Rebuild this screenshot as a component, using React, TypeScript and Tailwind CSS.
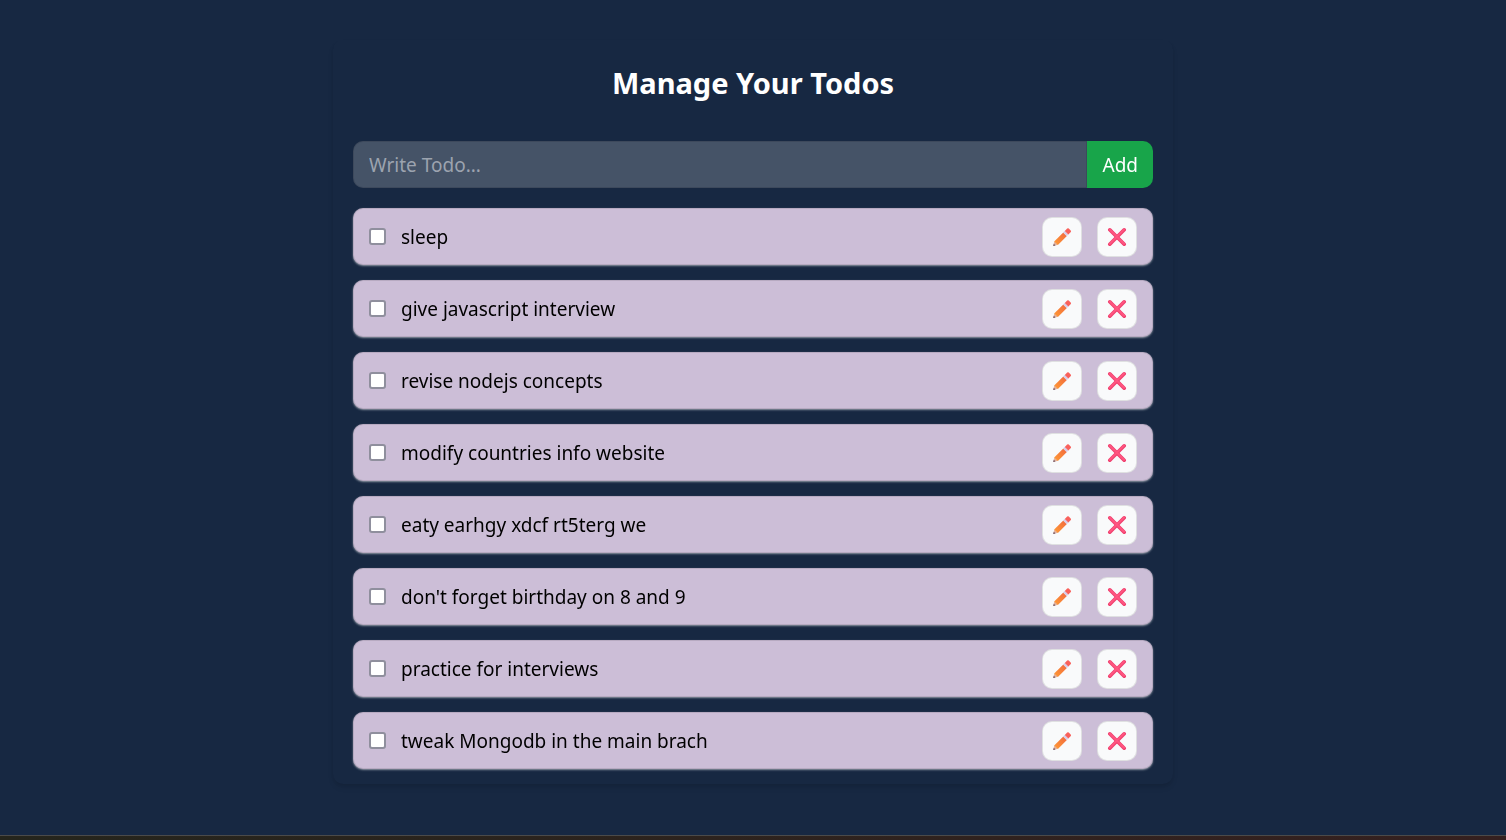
import { useState } from "react";

type Todo = { id: number; text: string; done: boolean };

const initialTodos: Todo[] = [
  "sleep",
  "give javascript interview",
  "revise nodejs concepts",
  "modify countries info website",
  "eaty earhgy xdcf rt5terg we",
  "don't forget birthday on 8 and 9",
  "practice for interviews",
  "tweak Mongodb in the main brach",
].map((text, id) => ({ id, text, done: false }));

function PencilIcon() {
  return (
    <svg viewBox="0 0 20 20" className="size-5" aria-hidden="true">
      <defs>
        <linearGradient id="pencil-body" x1="0" y1="1" x2="1" y2="0">
          <stop offset="0" stopColor="#ff9c35" />
          <stop offset="1" stopColor="#f1673f" />
        </linearGradient>
      </defs>
      <path d="M1.2 19 L2.4 14.2 L6 17.8 Z" fill="#e3b09a" />
      <path d="M1.2 19 L1.8 16.7 L3.5 18.4 Z" fill="#6b5365" />
      <path d="M2.2 14.4 L11.3 5.4 L14.9 9 L5.9 18 Z" fill="url(#pencil-body)" />
      <path d="M11 5.6 L13 3.7 L16.6 7.3 L14.7 9.2 Z" fill="#d9cde6" />
      <path d="M12.8 3.9 L15.2 1.5 Q16 0.9 16.8 1.6 L18.7 3.5 Q19.4 4.3 18.8 5.1 L16.4 7.5 Z" fill="#f9605b" />
    </svg>
  );
}

function CrossIcon() {
  return (
    <svg viewBox="0 0 20 20" className="size-5" aria-hidden="true" fill="none" strokeLinecap="round">
      <path d="M2.8 2.8 L17.2 17.2 M17.2 2.8 L2.8 17.2" stroke="#ee3d6c" strokeWidth="3.6" />
      <path d="M2.8 2.6 L17 16.8 M17 2.6 L2.8 16.8" stroke="#ff5580" strokeWidth="2" />
    </svg>
  );
}

const iconButton =
  "flex size-10 shrink-0 items-center justify-center rounded-[10px] border border-black/10 bg-gray-50 hover:bg-gray-100";

export default function App() {
  const [todos, setTodos] = useState(initialTodos);
  const [draft, setDraft] = useState("");

  const add = () => {
    const text = draft.trim();
    if (!text) return;
    setTodos([{ id: Date.now(), text, done: false }, ...todos]);
    setDraft("");
  };

  return (
    <div className="flex min-h-screen flex-col bg-[#172842] font-['Noto_Sans',sans-serif] text-[19px] leading-7">
      <main className="flex-1 px-4 pt-10 pb-[50px]">
        <div className="mx-auto w-full max-w-[840px] rounded-[10px] px-5 pt-6 pb-[15px] text-white shadow-md">
          <h1 className="mb-10 text-center text-[29px] leading-[37px] font-bold">Manage Your Todos</h1>
          <form
            className="mb-5 flex"
            onSubmit={(e) => {
              e.preventDefault();
              add();
            }}
          >
            <input
              type="text"
              autoFocus
              aria-label="New todo"
              placeholder="Write Todo..."
              value={draft}
              onChange={(e) => setDraft(e.target.value)}
              className="h-[47px] min-w-0 flex-1 rounded-l-[10px] border border-black/10 bg-white/20 px-[15px] outline-none placeholder:text-[#9ca3af]"
            />
            <button type="submit" className="shrink-0 rounded-r-[10px] bg-[#18a54a] px-[15px] text-white">
              Add
            </button>
          </form>
          <ul className="flex flex-col gap-[15px]">
            {todos.map((todo) => (
              <li
                key={todo.id}
                className="flex h-[57px] items-center gap-[15px] rounded-[10px] border border-black/10 bg-[#ccbed7] px-[15px] text-black shadow-[0_1px_2px_rgba(255,255,255,0.5)]"
              >
                <input
                  id={`todo-${todo.id}`}
                  type="checkbox"
                  checked={todo.done}
                  onChange={() => setTodos(todos.map((t) => (t.id === todo.id ? { ...t, done: !t.done } : t)))}
                  className="size-[17px] shrink-0 appearance-none rounded-[3px] border-2 border-[#8f8f9d] bg-white checked:bg-[#18a54a]"
                />
                <label htmlFor={`todo-${todo.id}`} className={todo.done ? "flex-1 line-through" : "flex-1"}>
                  {todo.text}
                </label>
                <button type="button" aria-label="Edit todo" className={iconButton}>
                  <PencilIcon />
                </button>
                <button
                  type="button"
                  aria-label="Delete todo"
                  onClick={() => setTodos(todos.filter((t) => t.id !== todo.id))}
                  className={iconButton}
                >
                  <CrossIcon />
                </button>
              </li>
            ))}
          </ul>
        </div>
      </main>
      <div className="h-[5px] border-t border-[#4a4a4a] bg-linear-to-r from-[#25251c] to-[#35201f]" />
    </div>
  );
}
